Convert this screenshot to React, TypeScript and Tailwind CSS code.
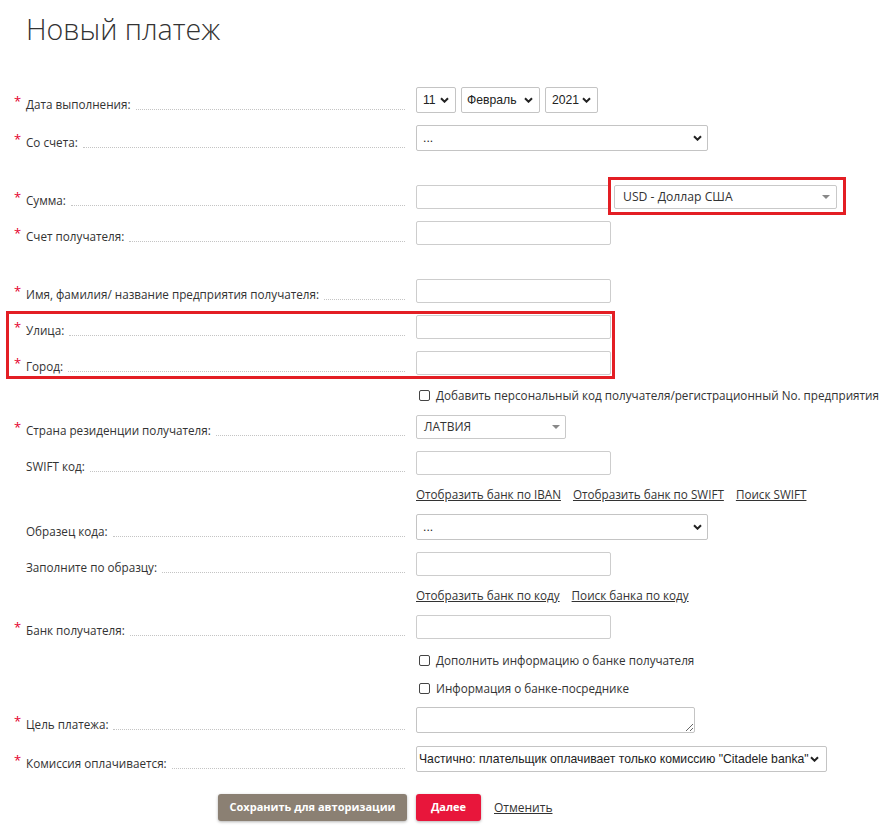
import React from "react";

const Chevron = () => (
  <svg width="9" height="6" viewBox="0 0 9 6" className="shrink-0">
    <path d="M1 1.2 L4.5 4.7 L8 1.2" fill="none" stroke="#222" strokeWidth="2" />
  </svg>
);

const Caret = () => (
  <svg width="8" height="4" viewBox="0 0 8 4" className="shrink-0">
    <path d="M0 0 L8 0 L4 4 Z" fill="#888" />
  </svg>
);

function NSelect({ w, text, pl = "pl-[6px]", pr = "pr-[6px]" }: { w: string; text: string; pl?: string; pr?: string }) {
  return (
    <div
      className={`${w} h-[26px] border border-[#c4c4c4] rounded-[2px] bg-white flex items-center justify-between ${pl} ${pr} font-['Liberation_Sans',Arial,sans-serif] text-[12.2px] text-[#222]`}
    >
      <span className="whitespace-nowrap">{text}</span>
      <Chevron />
    </div>
  );
}

function Input({ w = "w-[195px]", h = "h-[24px]" }: { w?: string; h?: string }) {
  return <div className={`${w} ${h} border border-[#cdcdcd] rounded-[2px] bg-white`} />;
}

function Row({
  label,
  req,
  mt,
  children,
}: {
  label?: string;
  req?: boolean;
  mt: string;
  children: React.ReactNode;
}) {
  return (
    <div className={`flex ${mt}`}>
      <div className="w-[416px] shrink-0 flex items-end pl-[14px] pr-[11px]">
        {label !== undefined && (
          <>
            <span className="w-[12px] shrink-0 text-[#e4002b] text-[13px] leading-[17px] self-end -translate-y-[3px]">
              {req ? "*" : ""}
            </span>
            <span className="text-[11.7px] leading-[17px] text-[#333] whitespace-nowrap">{label}</span>
            <span className="flex-1 ml-[5px] mb-[3px] border-b border-dotted border-[#c4c4c4]" />
          </>
        )}
      </div>
      <div className="flex items-center">{children}</div>
    </div>
  );
}

function Check({ text }: { text: string }) {
  return (
    <div className="flex items-center h-[17px]">
      <span className="ml-[3px] w-[11px] h-[11px] border border-[#444] rounded-[2px] bg-white" />
      <span className="ml-[6px] text-[11.7px] leading-[17px] text-[#333] whitespace-nowrap">{text}</span>
    </div>
  );
}

export default function App() {
  return (
    <div className="w-[896px] h-[833px] bg-white font-['Open_Sans',sans-serif] text-[#333] overflow-hidden">
      <h1 className="pt-[10px] pl-[26px] text-[28.6px] leading-[38px] font-light text-[#333]">Новый платеж</h1>

      <Row label="Дата выполнения:" req mt="mt-[39px]">
        <div className="flex gap-[5px]">
          <NSelect w="w-[40px]" text="11" />
          <NSelect w="w-[79px]" text="Февраль" pl="pl-[5px]" />
          <NSelect w="w-[53px]" text="2021" />
        </div>
      </Row>

      <Row label="Со счета:" req mt="mt-[12px]">
        <NSelect w="w-[292px]" text="..." pr="pr-[5px]" />
      </Row>

      <Row label="Сумма:" req mt="mt-[34px]">
        <div className="flex items-center">
          <Input />
          <div className="relative ml-[3px]">
            <div className="w-[223px] h-[24px] border border-[#c9c9c9] rounded-[2px] bg-white flex items-center justify-between pl-[8px] pr-[6px]">
              <span className="text-[12.2px] text-[#333] whitespace-nowrap">USD - Доллар США</span>
              <Caret />
            </div>
            <span className="absolute left-[-6px] right-[-9px] top-[-8px] bottom-[-6px] border-[3px] border-[#e31e24] pointer-events-none" />
          </div>
        </div>
      </Row>

      <Row label="Счет получателя:" req mt="mt-[12px]">
        <Input />
      </Row>

      <Row label="Имя, фамилия/ название предприятия получателя:" req mt="mt-[34px]">
        <Input />
      </Row>

      <div className="relative mt-[12px]">
        <Row label="Улица:" req mt="mt-0">
          <Input />
        </Row>
        <Row label="Город:" req mt="mt-[12px]">
          <Input />
        </Row>
        <span className="absolute left-[6px] w-[609px] top-[-4px] bottom-[-4px] border-[3px] border-[#e31e24] pointer-events-none" />
      </div>

      <Row mt="mt-[12px]">
        <Check text="Добавить персональный код получателя/регистрационный No. предприятия" />
      </Row>

      <Row label="Страна резиденции получателя:" req mt="mt-[11px]">
        <div className="w-[150px] h-[24px] border border-[#c9c9c9] rounded-[2px] bg-white flex items-center justify-between pl-[7px] pr-[5px]">
          <span className="text-[12px] text-[#333]">ЛАТВИЯ</span>
          <Caret />
        </div>
      </Row>

      <Row label="SWIFT код:" mt="mt-[12px]">
        <Input />
      </Row>

      <Row mt="mt-[11px]">
        <div className="flex gap-[12px] text-[11.7px] leading-[17px] text-[#333]">
          <a className="underline">Отобразить банк по IBAN</a>
          <a className="underline">Отобразить банк по SWIFT</a>
          <a className="underline">Поиск SWIFT</a>
        </div>
      </Row>

      <Row label="Образец кода:" mt="mt-[11px]">
        <NSelect w="w-[292px]" text="..." pr="pr-[5px]" />
      </Row>

      <Row label="Заполните по образцу:" mt="mt-[12px]">
        <Input />
      </Row>

      <Row mt="mt-[11px]">
        <div className="flex gap-[12px] text-[11.7px] leading-[17px] text-[#333]">
          <a className="underline">Отобразить банк по коду</a>
          <a className="underline">Поиск банка по коду</a>
        </div>
      </Row>

      <Row label="Банк получателя:" req mt="mt-[11px]">
        <Input />
      </Row>

      <Row mt="mt-[13px]">
        <Check text="Дополнить информацию о банке получателя" />
      </Row>

      <Row mt="mt-[11px]">
        <Check text="Информация о банке-посреднике" />
      </Row>

      <Row label="Цель платежа:" req mt="mt-[10px]">
        <textarea className="block w-[279px] h-[26px] border border-[#c4c4c4] rounded-[2px] bg-white resize-y" />
      </Row>

      <Row label="Комиссия оплачивается:" req mt="mt-[13px]">
        <NSelect
          w="w-[411px]"
          text={'Частично: плательщик оплачивает только комиссию "Citadele banka"'}
          pl="pl-[2px]"
          pr="pr-[7px]"
        />
      </Row>

      <div className="flex items-center mt-[22px] pl-[218px]">
        <button className="w-[189px] h-[27px] rounded-[3px] bg-[#8b8073] text-white text-[11px] font-bold shadow-[0_1px_3px_rgba(0,0,0,0.3)]">
          Сохранить для авторизации
        </button>
        <button className="ml-[9px] w-[65px] h-[27px] rounded-[3px] bg-[#e8163b] text-white text-[11px] font-bold shadow-[0_1px_3px_rgba(0,0,0,0.3)]">
          Далее
        </button>
        <a className="ml-[13px] underline text-[12px] text-[#333]">Отменить</a>
      </div>
    </div>
  );
}
